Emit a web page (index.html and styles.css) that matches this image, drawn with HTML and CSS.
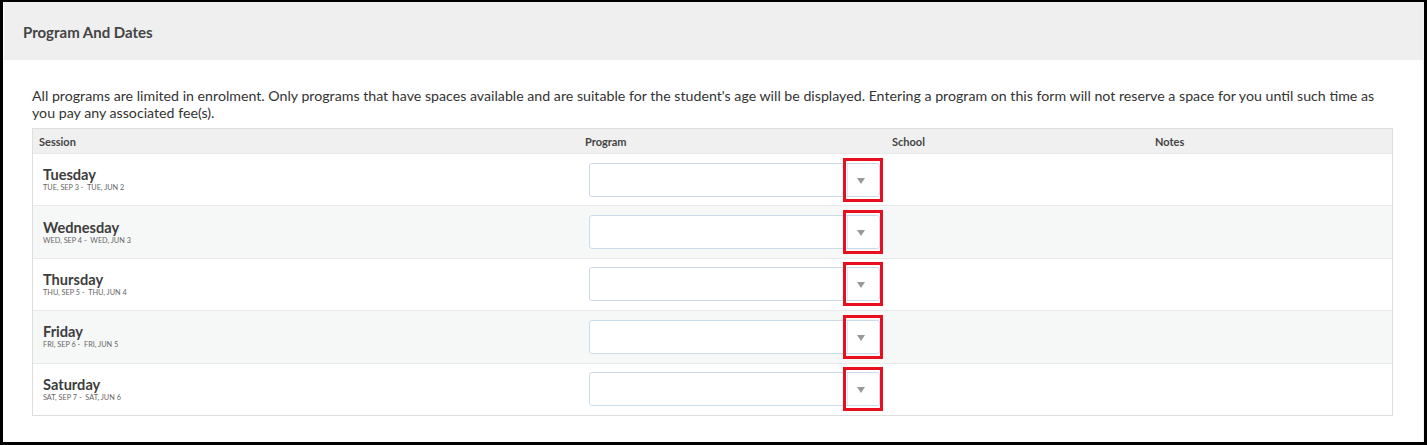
FILE: index.html
```html
<!DOCTYPE html>
<html lang="en">
<head>
    <meta charset="UTF-8">
    <title>Program And Dates</title>
<link rel="stylesheet" href="styles.css">
</head>
<body>
    <div class="frame">
        <div class="panel">
            <div class="panel-heading">Program And Dates</div>
            <div class="panel-body">
                <p class="intro">All programs are limited in enrolment. Only programs that have spaces available and are suitable for the student's age will be displayed. Entering a program on this form will not reserve a space for you until such time as you pay any associated fee(s).</p>

                <div class="sessions">
                    <div class="row head">
                        <div class="cell">Session</div>
                        <div class="cell">Program</div>
                        <div class="cell">School</div>
                        <div class="cell">Notes</div>
                    </div>

                    <div class="row">
                        <div class="cell session">
                            <div class="day">Tuesday</div>
                            <div class="dates">Tue, Sep 3 - &nbsp;Tue, Jun 2</div>
                        </div>
                        <div class="cell program">
                            <div class="select"><span class="arrow"></span><span class="mark"></span></div>
                        </div>
                        <div class="cell"></div>
                        <div class="cell"></div>
                    </div>

                    <div class="row">
                        <div class="cell session">
                            <div class="day">Wednesday</div>
                            <div class="dates">Wed, Sep 4 - &nbsp;Wed, Jun 3</div>
                        </div>
                        <div class="cell program">
                            <div class="select"><span class="arrow"></span><span class="mark"></span></div>
                        </div>
                        <div class="cell"></div>
                        <div class="cell"></div>
                    </div>

                    <div class="row">
                        <div class="cell session">
                            <div class="day">Thursday</div>
                            <div class="dates">Thu, Sep 5 - &nbsp;Thu, Jun 4</div>
                        </div>
                        <div class="cell program">
                            <div class="select"><span class="arrow"></span><span class="mark"></span></div>
                        </div>
                        <div class="cell"></div>
                        <div class="cell"></div>
                    </div>

                    <div class="row">
                        <div class="cell session">
                            <div class="day">Friday</div>
                            <div class="dates">Fri, Sep 6 - &nbsp;Fri, Jun 5</div>
                        </div>
                        <div class="cell program">
                            <div class="select"><span class="arrow"></span><span class="mark"></span></div>
                        </div>
                        <div class="cell"></div>
                        <div class="cell"></div>
                    </div>

                    <div class="row">
                        <div class="cell session">
                            <div class="day">Saturday</div>
                            <div class="dates">Sat, Sep 7 - &nbsp;Sat, Jun 6</div>
                        </div>
                        <div class="cell program">
                            <div class="select"><span class="arrow"></span><span class="mark"></span></div>
                        </div>
                        <div class="cell"></div>
                        <div class="cell"></div>
                    </div>
                </div>
            </div>
        </div>
    </div>
</body>
</html>
```

FILE: styles.css
```css
html, body {
    margin: 0;
    background: #fff;
}
body {
    font-family: Lato, 'Open Sans', sans-serif;
    color: #444;
}
.frame {
    box-sizing: border-box;
    width: 1427px;
    height: 445px;
    border-style: solid;
    border-color: #000;
    border-width: 2px 3px 3px 3px;
}
.panel {
    height: 100%;
    border-right: 1px solid #eef1f5;
    border-left: 1px solid #fff;
}
.panel-heading {
    height: 58px;
    background: #efefef;
    box-sizing: border-box;
    padding: 20px 0 0 19px;
    font-size: 15px;
    font-weight: bold;
    color: #444;
    line-height: 20px;
}
.panel-body {
    padding: 27px 30px 0 28px;
}
.intro {
    margin: 0 0 7px;
    font-size: 14.2px;
    line-height: 17px;
    color: #333;
}
.sessions {
    border: 1px solid #dedede;
}
.row {
    display: grid;
    grid-template-columns: 546px 307px 263px 1fr;
    box-sizing: border-box;
    height: 52.4px;
    border-top: 1px solid #e8eaea;
    align-items: center;
}
.row:nth-child(odd) {
    background: #f6f7f7;
}
.row.head {
    height: 24px;
    border-top: none;
    background: #f0f0f0;
    font-size: 11px;
    font-weight: bold;
    color: #444;
}
.head .cell {
    padding-left: 6px;
}
.session {
    padding-left: 10px;
    padding-top: 1px;
}
.day {
    font-size: 14.6px;
    font-weight: bold;
    line-height: 16px;
    color: #3d3d3d;
}
.dates {
    font-size: 7.3px;
    line-height: 10px;
    text-transform: uppercase;
    color: #666;
}
.program {
    padding-left: 10px;
}
.select {
    position: relative;
    width: 291px;
    height: 34px;
    box-sizing: border-box;
    border: 1px solid #cadcea;
    border-radius: 3px;
    background: #fff;
}
.arrow {
    position: absolute;
    top: 0;
    right: 0;
    bottom: 0;
    width: 31px;
    border-left: 1px solid #dfe9f1;
}
.arrow::after {
    content: "";
    position: absolute;
    left: 9px;
    top: 14px;
    border-left: 4.5px solid transparent;
    border-right: 4.5px solid transparent;
    border-top: 6px solid #999;
}
.mark {
    position: absolute;
    top: -6px;
    right: -4px;
    width: 40px;
    height: 44px;
    box-sizing: border-box;
    border: 3px solid #e8101e;
}
```
